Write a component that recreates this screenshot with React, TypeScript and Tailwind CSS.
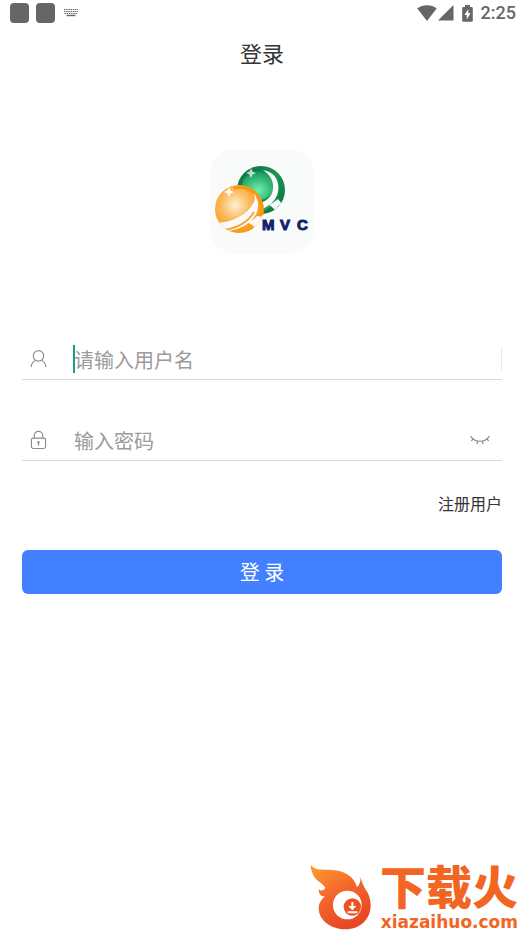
import { useState } from 'react';
import type { ReactNode } from 'react';

function StatusBar() {
  return (
    <div className="flex h-[26px] items-center justify-between pl-2.5 pr-2 text-[#666666]">
      <div className="flex items-center gap-[7px]">
        <span className="h-5 w-[19px] rounded bg-[#666666]" />
        <span className="h-5 w-[19px] rounded bg-[#666666]" />
        <svg className="ml-px" width="16" height="10" viewBox="0 0 16 10" fill="none" stroke="currentColor" strokeWidth="1">
          <path d="M1 1.5h14M1 3.5h14M1.5 5.5h13" strokeDasharray="1.5 0.7" />
          <path d="M3.5 7.5h9" strokeWidth="1.4" />
        </svg>
      </div>
      <div className="flex items-center">
        <svg width="20" height="16" viewBox="0 0 20 16" fill="currentColor">
          <path d="M10 16L.3 3.6C3 1.4 6.2.3 10 .3s7 1.1 9.7 3.3z" />
        </svg>
        <svg className="ml-px" width="16" height="16" viewBox="0 0 16 16" fill="currentColor">
          <path d="M15.5 0v15.5H0z" />
        </svg>
        <svg className="ml-2" width="11" height="17" viewBox="0 0 11 17">
          <path
            d="M3 0h5v2h1.500q1.300 0 1.300 1.300v12.200q0 1.300-1.300 1.300h-8Q.2 16.800.2 15.500V3.300Q.2 2 1.500 2H3z"
            fill="currentColor"
          />
          <path d="M6.300 4L2.500 10h2.300v4.500L8.600 8.300H6.300z" fill="#fff" />
        </svg>
        <span className="ml-2 font-[Roboto] text-lg font-medium leading-6">2:25</span>
      </div>
    </div>
  );
}

function AppLogo() {
  return (
    <div className="size-[104px] rounded-3xl bg-[#f8fbfa]">
      <svg width="104" height="104" viewBox="0 0 104 104">
        <defs>
          <linearGradient id="green" x1="0" y1="0" x2="1" y2="1">
            <stop offset="0" stopColor="#0a6b3a" />
            <stop offset="0.5" stopColor="#1d9458" />
            <stop offset="1" stopColor="#087039" />
          </linearGradient>
          <radialGradient id="emerald" cx="0.5" cy="0.65" r="0.6">
            <stop offset="0" stopColor="#6df0b0" />
            <stop offset="1" stopColor="#1f9f62" />
          </radialGradient>
          <radialGradient id="orange" cx="0.42" cy="0.42" r="0.56">
            <stop offset="0" stopColor="#fff0d4" />
            <stop offset="0.55" stopColor="#fcb95a" />
            <stop offset="1" stopColor="#fa9a16" />
          </radialGradient>
          <clipPath id="greenBall">
            <circle cx="51" cy="41" r="24" />
          </clipPath>
          <clipPath id="orangeBall">
            <circle cx="29" cy="60" r="24" />
          </clipPath>
        </defs>
        <circle cx="51" cy="41" r="24" fill="url(#green)" />
        <g clipPath="url(#greenBall)">
          <ellipse cx="48" cy="37" rx="16" ry="14" fill="url(#emerald)" />
          <path d="M53 21c12 2 17 11 15 22-2 12-11 19-25 21l2-8c11-3 17-8 18-16 1-8-3-14-10-19z" fill="#f8fbfa" />
          <path d="M49 62c9-3 16-8 19-16" fill="none" stroke="#1d9458" strokeWidth="1.500" />
          <path d="M59 56l5-3 4-3 4 5-4 2-2 6c-1-3-4-5-7-7z" fill="#f8fbfa" />
          <path d="M41 19l1.500 3.500 3.500 1.500-3.500 1.500L41 29l-1.500-3.500L36 24l3.500-1.500z" fill="#fff" opacity="0.7" />
        </g>
        <circle cx="29" cy="60" r="24" fill="url(#orange)" />
        <path d="M24 39c16-4 31 9 28 27" fill="none" stroke="#f9960c" strokeWidth="3" />
        <g clipPath="url(#orangeBall)">
          <path d="M3 74c18 0 34-7 41-21 1-3 1-6 0-9 8 12 4 25-10 33-8 4-17 6-26 6z" fill="#f8fbfa" />
          <path d="M14 81c14-2 24-8 30-18" fill="none" stroke="#f9a229" strokeWidth="1.800" />
          <path d="M37 73l6-2 4-4 7 1-4 5-3 8c-3-4-6-6-10-8z" fill="#f8fbfa" />
        </g>
        <path d="M19 38l1.500 3.500L24 43l-3.500 1.500L19 48l-1.500-3.500L14 43l3.500-1.500z" fill="#fff" />
        <text
          x="52 70 87"
          y="81"
          fill="#11226b"
          stroke="#11226b"
          strokeWidth="1"
          className="font-['Liberation_Sans'] text-[15px] font-bold"
        >
          MVC
        </text>
      </svg>
    </div>
  );
}

function UserIcon() {
  return (
    <svg width="17" height="20" viewBox="0 0 18 20" fill="none" stroke="#8a8a8a" strokeWidth="1.200">
      <circle cx="9" cy="6.700" r="5.500" />
      <path d="M1 18.500c.7-4 2.700-6.500 5.500-7.200M17 18.500c-.7-4-2.700-6.500-5.500-7.200" />
    </svg>
  );
}

function LockIcon() {
  return (
    <svg width="17" height="20" viewBox="0 0 18 20" fill="none" stroke="#8a8a8a" strokeWidth="1.200">
      <rect x="1.500" y="8" width="15" height="11" rx="2" />
      <path d="M4.500 8V5.300a4.500 4.500 0 0 1 9 0V8" />
      <path d="M9 12.500v3.500" />
      <circle cx="9" cy="12.300" r="0.700" fill="#8a8a8a" />
    </svg>
  );
}

function ClosedEyeIcon() {
  return (
    <svg width="20" height="10" viewBox="0 0 20 10" fill="none" stroke="#858585" strokeWidth="1.200">
      <path d="M.5 1C5 8 15 8 19.500 1" />
      <path d="M3.300 4L1.200 5.800M7.700 6.200l-.8 2.800M12.300 6.200l.8 2.800M16.700 4l2.100 1.800" />
    </svg>
  );
}

interface FieldProps {
  id: string;
  label: string;
  type: string;
  placeholder: string;
  icon: ReactNode;
  children?: ReactNode;
}

function Field({ id, label, type, placeholder, icon, children }: FieldProps) {
  return (
    <div className="relative flex h-10 items-center border-b border-[#dcdcdc] pb-px pl-2">
      <label htmlFor={id} aria-label={label} className="w-11">
        {icon}
      </label>
      <input
        id={id}
        type={type}
        placeholder={placeholder}
        className="h-full min-w-0 flex-1 bg-transparent text-xl text-[#333333] outline-none placeholder:text-[#9b9b9b]"
      />
      {children}
    </div>
  );
}

function SiteMark() {
  return (
    <div className="flex items-end justify-end gap-2 pb-0.5 pr-1.5 text-[#f26522]">
      <svg width="62" height="66" viewBox="12 10 186 198">
        <defs>
          <linearGradient id="flame" x1="0" y1="0" x2="0.500" y2="1">
            <stop offset="0" stopColor="#ffa030" />
            <stop offset="0.500" stopColor="#f4682b" />
            <stop offset="1" stopColor="#e94824" />
          </linearGradient>
        </defs>
        <path
          d="M14 12C28 30 48 26 72 27C112 28 146 46 153 80C162 70 165 60 163 48C168 64 172 76 180 88C190 102 194 118 194 134C194 176 162 206 120 206C76 206 38 180 38 142C38 128 46 116 58 106C46 110 38 100 38 86C46 92 54 90 58 82C50 66 32 64 22 44C18 34 14 24 14 12z"
          fill="url(#flame)"
        />
        <circle cx="124" cy="133" r="43" fill="#fff" />
        <circle cx="139" cy="139" r="26" fill="#ec5426" />
        <path d="M139 124v14M125 155h29" stroke="#fff" strokeWidth="6" />
        <path d="M127 136h24l-12 13z" fill="#fff" />
      </svg>
      <div className="flex flex-col items-end gap-3">
        <span className="text-[46px] font-black leading-9">下载火</span>
        <span className="font-['DejaVu_Sans'] text-[17px] font-bold leading-4">xiazaihuo.com</span>
      </div>
    </div>
  );
}

export default function App() {
  const [showPassword, setShowPassword] = useState(false);

  return (
    <div className="flex min-h-screen flex-col bg-white font-['Noto_Sans_CJK_SC',sans-serif] text-[#333333]">
      <StatusBar />
      <header className="flex h-[52px] items-center justify-center">
        <h1 className="text-[22px]">登录</h1>
      </header>

      <main className="flex flex-col px-[22px] pt-[71px]">
        <div className="flex justify-center">
          <AppLogo />
        </div>

        <form className="flex flex-col pt-[87px]" onSubmit={(e) => e.preventDefault()}>
          <Field id="username" label="用户名" type="text" placeholder="请输入用户名" icon={<UserIcon />}>
            <span className="absolute left-[51px] top-[5px] h-7 w-0.5 bg-[#159d88]" />
            <span className="h-[22px] w-px bg-[#e6e6e6]" />
          </Field>
          <div className="h-[41px]" />
          <Field
            id="password"
            label="密码"
            type={showPassword ? 'text' : 'password'}
            placeholder="输入密码"
            icon={<LockIcon />}
          >
            <button type="button" aria-label="显示密码" className="px-3 py-2" onClick={() => setShowPassword(!showPassword)}>
              <ClosedEyeIcon />
            </button>
          </Field>

          <a href="#register" className="mt-[30px] self-end text-base leading-6">
            注册用户
          </a>
          <button type="submit" className="mt-[35px] h-11 rounded-md bg-[#4380ff] text-xl text-white">
            登 录
          </button>
        </form>
      </main>

      <footer className="mt-auto">
        <SiteMark />
      </footer>
    </div>
  );
}
